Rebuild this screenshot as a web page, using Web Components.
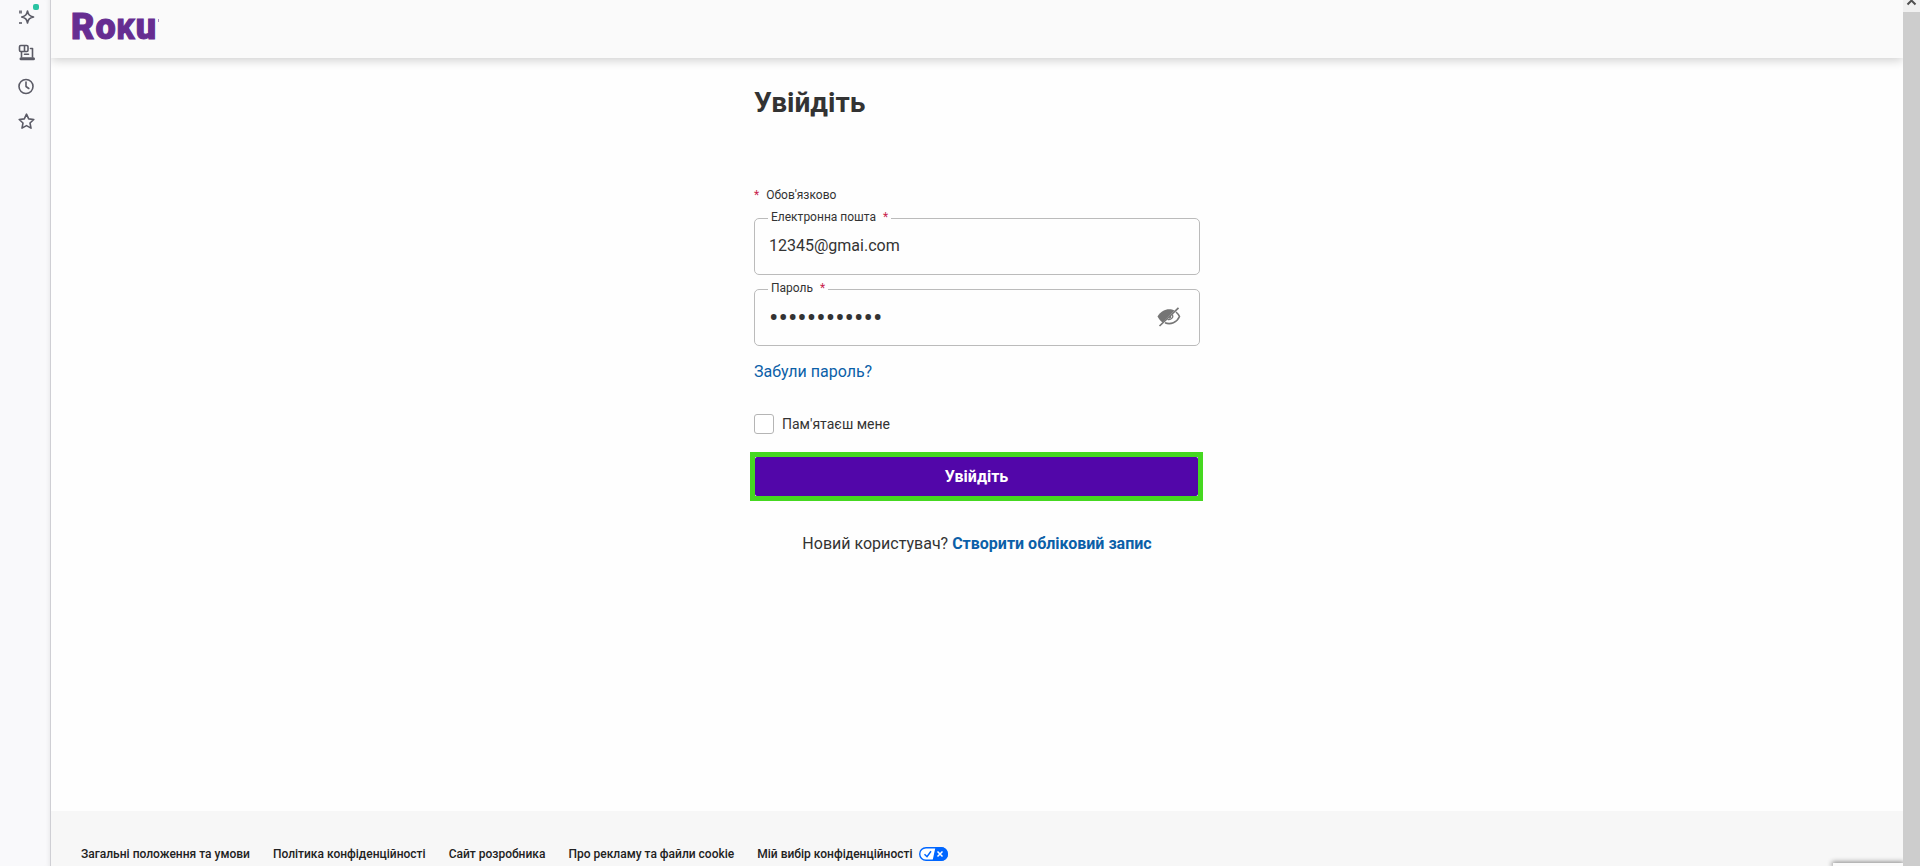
<!DOCTYPE html>
<html lang="uk">
<head>
<meta charset="utf-8">
<title>Roku – Увійдіть</title>
<style>
html, body { margin: 0; height: 100%; }
body { font-family: Roboto, "Liberation Sans", sans-serif; font-size: 16px; line-height: 24px; color: #333; background: #fefefe; overflow: hidden; }
</style>
</head>
<body>
<app-shell></app-shell>
<script>
const define = (name, html, setup) => {
  const t = document.createElement('template');
  t.innerHTML = html;
  customElements.define(name, class extends HTMLElement {
    constructor() {
      super();
      this.attachShadow({ mode: 'open' }).append(t.content.cloneNode(true));
    }
    connectedCallback() { if (setup) setup(this, this.shadowRoot); }
  });
};

define('side-rail', `
<style>
:host { display: block; width: 51px; box-sizing: border-box; flex: none; background: #f9f9fb; border-right: 1px solid #cfcfd4; box-shadow: inset -4px 0 4px -3px #0001; }
nav { display: flex; flex-direction: column; align-items: center; gap: 14px; padding: 5px 0 0 1px; }
button { position: relative; display: block; width: 20px; height: 21px; padding: 0; border: 0; background: none; color: #5b5b66; }
svg { display: block; width: 20px; height: 20px; fill: none; stroke: currentColor; stroke-width: 1.6; stroke-linejoin: round; stroke-linecap: round; }
i { position: absolute; right: -3px; top: -1px; width: 6px; height: 6px; border-radius: 2px; background: #2ac3a2; }
</style>
<nav aria-label="Бічна панель">
<button aria-label="AI"><svg viewBox="0 0 20 20"><path d="M11.500 5c.8 3.800 1.900 5 6 6-4.100.9-5.200 2.100-6 6-.8-3.900-1.900-5.100-5.800-6 3.900-1 5-2.200 5.800-6z"/><path fill="currentColor" stroke="none" d="M3 4.500h3v3H3zM3 16h3v2H3z" opacity=".8"/></svg><i></i></button>
<button aria-label="Вкладки"><svg viewBox="0 0 20 20"><rect x="3.500" y="4.500" width="8.500" height="6" rx="1.200"/><path d="M8.500 5v5M5.500 11v5M14.500 7.500h2V16"/><path d="M5 17.800h12.500" stroke-width="3"/><path d="M8.500 13.300h4"/></svg></button>
<button aria-label="Історія"><svg viewBox="0 0 20 20"><circle cx="10" cy="10.500" r="7"/><path d="M10 6v4.500l2.800 2"/></svg></button>
<button aria-label="Закладки"><svg viewBox="0 0 20 20"><path d="M10.500 3.200l2.200 4.700 5.100.6-3.800 3.500 1 5.100-4.500-2.500L6 17.100 7 12 3.200 8.500l5.100-.6z"/></svg></button>
</nav>`);

define('brand-logo', `
<style>
:host { display: block; }
a { display: flex; align-items: baseline; gap: 1px; color: #662d91; text-decoration: none; font-weight: 900; font-size: 36px; line-height: 40px; -webkit-text-stroke: 1px #662d91; }
.k { font-size: 28px; text-transform: uppercase; }
i { width: 1px; height: 3px; margin: 12px 0 0 1px; background: #a98bc2; align-self: flex-start; }
</style>
<a href="#" aria-label="Roku"><span>R</span><span>o</span><span class="k">k</span><span>u</span><i></i></a>`);

define('site-header', `
<style>
:host { display: flex; height: 58px; box-sizing: border-box; padding: 7px 0 0 20px; background: #fafafa; box-shadow: 0 2px 10px #0003; position: relative; flex: none; }
</style><slot></slot>`);

define('text-field', `
<style>
:host { display: block; }
.box { position: relative; display: flex; align-items: center; height: 57px; box-sizing: border-box; border: 1px solid #bbb; border-radius: 5px; padding: 0 18px 0 14px; }
label { position: absolute; left: 13px; top: -10px; padding: 0 3px; background: #fefefe; font-size: 12px; line-height: 16px; }
label span { color: #c8234d; padding-left: 4px; }
input { flex: 1; min-width: 0; border: 0; outline: 0; padding: 0 0 2px; margin: 0; background: none; font: inherit; color: inherit; }
input[type=password] { font-size: 28px; padding: 0; }
</style>
<div class="box"><label for="f"><b style="font-weight:400"></b> <span>*</span></label><input id="f"><slot></slot></div>`,
(el, r) => {
  r.querySelector('b').textContent = el.getAttribute('label');
  const i = r.querySelector('input');
  i.type = el.getAttribute('type');
  i.value = el.getAttribute('value');
});

define('reveal-button', `
<style>
:host { display: block; }
button { display: block; border: 0; padding: 0 0 2px; background: none; color: #757575; }
svg { display: block; width: 24px; height: 20px; }
</style>
<button type="button" aria-label="Показати пароль"><svg viewBox="0 0 24 20"><path d="M.5 9.500C5 1.500 13 1 17.500 3.500L5.500 15.500C3.500 14 2 12 .5 9.500z" fill="currentColor"/><path d="M19 5c1.500 1.200 2.700 2.700 3.500 4.500C20 15.500 13.500 18 8 15.800" fill="none" stroke="currentColor" stroke-width="1.600"/><path d="M15.500 7.500c1.300 3-1.500 5.800-5 4.800M13.500 9c.3 1.300-.4 2-1.500 2" fill="none" stroke="currentColor" stroke-width="1.300"/><path d="M2.500 19L21.500.8" stroke="currentColor" stroke-width="1.700"/></svg></button>`);

define('check-option', `
<style>
:host { display: block; }
label { display: flex; align-items: center; gap: 8px; font-size: 14px; line-height: 20px; }
input { appearance: none; width: 20px; height: 20px; margin: 0; border: 1px solid #b5b5b5; border-radius: 3px; background: #fff; }
</style>
<label><input type="checkbox"><slot></slot></label>`);

define('primary-button', `
<style>
:host { display: block; border: 5px solid #45d820; background: #fff; }
button { display: block; width: 100%; height: 39px; border: 0; border-radius: 2px; background: #5206a9; color: #fff; font: 700 16px/24px Roboto, sans-serif; padding: 0; }
</style>
<button type="submit"><slot></slot></button>`);

define('sign-in', `
<style>
:host { display: block; width: 446px; max-width: 100%; margin: 0 auto; padding-top: 27px; }
h1 { margin: 0; font-size: 28px; line-height: 36px; }
.req { margin: 66px 0 15px; font-size: 12px; line-height: 16px; }
.req span { color: #c8234d; padding-right: 4px; }
text-field + text-field { margin-top: 14px; }
a { color: #0b60a8; text-decoration: none; }
.forgot { margin: 14px 0 30px; }
primary-button { margin: 18px -3px 31px -4px; }
.new { margin: 0; text-align: center; }
.new a { font-weight: 700; }
</style>
<form onsubmit="return false">
<h1>Увійдіть</h1>
<p class="req"><span>*</span> Обов'язково</p>
<text-field label="Електронна пошта" type="text" value="12345@gmai.com"></text-field>
<text-field label="Пароль" type="password" value="abcdefghijkl"><reveal-button></reveal-button></text-field>
<p class="forgot"><a href="#">Забули пароль?</a></p>
<check-option>Пам'ятаєш мене</check-option>
<primary-button>Увійдіть</primary-button>
<p class="new">Новий користувач? <a href="#">Створити обліковий запис</a></p>
</form>`);

define('site-footer', `
<style>
:host { display: block; flex: none; background: #f7f7f7; padding: 33px 30px 2px; }
nav { display: flex; gap: 23px; font-size: 12px; line-height: 20px; font-weight: 500; }
a { display: flex; align-items: center; gap: 6px; color: #222; text-decoration: none; }
svg { display: block; width: 29px; height: 14px; }
</style>
<nav>
<a href="#">Загальні положення та умови</a>
<a href="#">Політика конфіденційності</a>
<a href="#">Сайт розробника</a>
<a href="#">Про рекламу та файли cookie</a>
<a href="#">Мій вибір конфіденційності <svg viewBox="0 0 29 14"><rect x=".7" y=".7" width="27.600" height="12.600" rx="6.300" fill="#fff" stroke="#06f" stroke-width="1.400"/><path d="M16.500 0H22a7 7 0 0 1 0 14h-8.500z" fill="#06f"/><path d="M5.500 7.200l2.500 2.500 4-5.500" fill="none" stroke="#06f" stroke-width="1.500"/><path d="M18.500 4.500l5 5M23.500 4.500l-5 5" stroke="#fff" stroke-width="1.500"/></svg></a>
</nav>`);

define('scroll-track', `
<style>
:host { display: block; width: 17px; flex: none; background: #cdcdcd; }
button { display: block; width: 100%; height: 12px; border: 0; padding: 0; background: #f0f0f0; }
svg { display: block; width: 17px; height: 12px; }
</style>
<button aria-label="Вгору"><svg viewBox="0 0 17 12"><path d="M4.500 4.500l4-4 4 4" fill="none" stroke="#505050" stroke-width="2"/></svg></button>`);

define('app-shell', `
<style>
:host { display: flex; min-height: 100vh; }
.page { flex: 1; min-width: 0; display: flex; flex-direction: column; position: relative; overflow: hidden; }
main { flex: 1; }
.badge { position: absolute; right: 0; bottom: 0; width: 70px; height: 3px; background: #fafafa; box-shadow: 0 0 5px 1px #808080; }
</style>
<side-rail></side-rail>
<div class="page">
<site-header><brand-logo></brand-logo></site-header>
<main><sign-in></sign-in></main>
<site-footer></site-footer>
<div class="badge"></div>
</div>
<scroll-track></scroll-track>`);
</script>
</body>
</html>
